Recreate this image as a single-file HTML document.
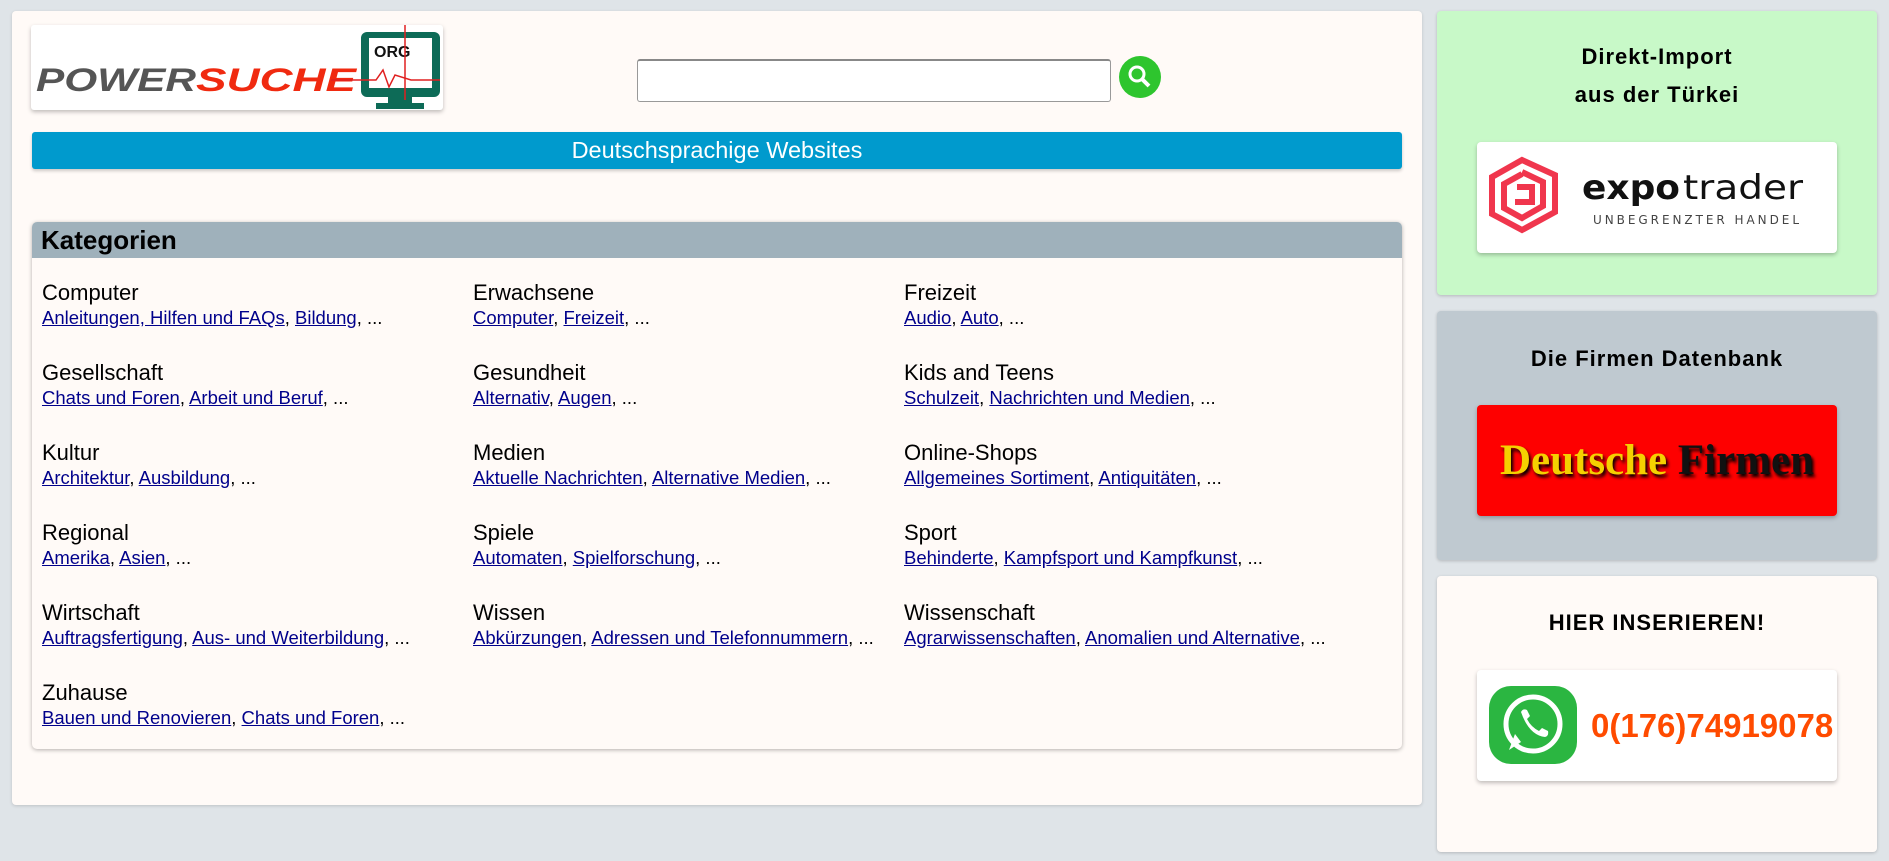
<!DOCTYPE html>
<html><head><meta charset="utf-8"><style>
*{box-sizing:border-box;margin:0;padding:0}
body{width:1889px;height:861px;background:#dfe4e8;font-family:"Liberation Sans",Arial,sans-serif;position:relative;overflow:hidden}
.main{position:absolute;left:12px;top:11px;width:1410px;height:794px;background:#fffaf7;border-radius:4px;box-shadow:0 1px 3px rgba(0,0,0,.15)}
.logo{position:absolute;left:31px;top:25px;width:412px;height:85px;background:#fff;border-radius:3px;box-shadow:0 2px 4px rgba(0,0,0,.25)}
.search{position:absolute;left:637px;top:59px;width:474px;height:43px;border:1px solid #999;border-top:2px solid #888;border-radius:3px;background:#fff}
.btn{position:absolute;left:1119px;top:56px;width:42px;height:42px;border-radius:50%;background:#2ec52e}
.blue{position:absolute;left:32px;top:132px;width:1370px;height:37px;background:#009acd;border-radius:3px;color:#fff;text-align:center;font-size:23.5px;line-height:37px;box-shadow:0 2px 3px rgba(0,0,0,.2)}
.kat{position:absolute;left:32px;top:222px;width:1370px;height:527px;background:#fffaf7;border-radius:5px;box-shadow:0 1px 4px rgba(0,0,0,.3)}
.kath{height:36px;background:#9fb1bb;border-radius:5px 5px 0 0;font-weight:bold;font-size:26px;line-height:36px;padding-left:9px;color:#000}
.c{position:absolute;width:430px}
.c b{display:block;font-weight:normal;font-size:22px;color:#000;line-height:26px}
.c span{display:block;font-size:18.5px;line-height:24px;color:#000;white-space:nowrap}
.c a{color:#00008b;text-decoration:underline}
.side{position:absolute;left:1437px;width:440px;border-radius:4px;box-shadow:0 1px 3px rgba(0,0,0,.2);text-align:center}
.side h3{font-size:22px;letter-spacing:1px;line-height:38px;color:#000}
.card{position:absolute;left:40px;width:360px;height:111px;border-radius:4px;box-shadow:0 2px 4px rgba(0,0,0,.25);background:#fff}
</style></head><body>
<div class="main"></div>
<div class="logo">
<svg width="412" height="85" viewBox="0 0 412 85">
<text x="5" y="66" font-family="Liberation Sans" font-weight="bold" font-style="italic" font-size="32" fill="#555" textLength="160" lengthAdjust="spacingAndGlyphs">POWER</text>
<text x="165" y="66" font-family="Liberation Sans" font-weight="bold" font-style="italic" font-size="32" fill="#f02a10" textLength="160" lengthAdjust="spacingAndGlyphs">SUCHE</text>
<rect x="330" y="7" width="79" height="65" rx="6" fill="#0d6b57"/>
<rect x="338" y="13" width="63" height="50" fill="#fff"/>
<rect x="357" y="72" width="24" height="10" fill="#0d6b57"/><rect x="345" y="78" width="48" height="6" fill="#0d6b57"/>
<text x="343" y="32" font-family="Liberation Sans" font-weight="bold" font-size="16" fill="#111">ORG</text>
<path d="M300 55 L345 55 L352 45 L358 62 L364 50 L380 55 L409 55" stroke="#e02020" fill="none" stroke-width="1.5"/>
<line x1="374" y1="0" x2="374" y2="75" stroke="#e02020" stroke-width="1.5"/>
</svg></div>
<div class="search"></div>
<div class="btn"><svg width="42" height="42"><circle cx="18" cy="18" r="7" stroke="#fff" stroke-width="3" fill="none"/><line x1="23" y1="23" x2="30" y2="30" stroke="#fff" stroke-width="4"/></svg></div>
<div class="blue">Deutschsprachige Websites</div>
<div class="kat"><div class="kath">Kategorien</div></div>

<div class="c" style="left:42px;top:280px"><b>Computer</b><span><a>Anleitungen, Hilfen und FAQs</a>, <a>Bildung</a>, ...</span></div>
<div class="c" style="left:473px;top:280px"><b>Erwachsene</b><span><a>Computer</a>, <a>Freizeit</a>, ...</span></div>
<div class="c" style="left:904px;top:280px"><b>Freizeit</b><span><a>Audio</a>, <a>Auto</a>, ...</span></div>
<div class="c" style="left:42px;top:360px"><b>Gesellschaft</b><span><a>Chats und Foren</a>, <a>Arbeit und Beruf</a>, ...</span></div>
<div class="c" style="left:473px;top:360px"><b>Gesundheit</b><span><a>Alternativ</a>, <a>Augen</a>, ...</span></div>
<div class="c" style="left:904px;top:360px"><b>Kids and Teens</b><span><a>Schulzeit</a>, <a>Nachrichten und Medien</a>, ...</span></div>
<div class="c" style="left:42px;top:440px"><b>Kultur</b><span><a>Architektur</a>, <a>Ausbildung</a>, ...</span></div>
<div class="c" style="left:473px;top:440px"><b>Medien</b><span><a>Aktuelle Nachrichten</a>, <a>Alternative Medien</a>, ...</span></div>
<div class="c" style="left:904px;top:440px"><b>Online-Shops</b><span><a>Allgemeines Sortiment</a>, <a>Antiquitäten</a>, ...</span></div>
<div class="c" style="left:42px;top:520px"><b>Regional</b><span><a>Amerika</a>, <a>Asien</a>, ...</span></div>
<div class="c" style="left:473px;top:520px"><b>Spiele</b><span><a>Automaten</a>, <a>Spielforschung</a>, ...</span></div>
<div class="c" style="left:904px;top:520px"><b>Sport</b><span><a>Behinderte</a>, <a>Kampfsport und Kampfkunst</a>, ...</span></div>
<div class="c" style="left:42px;top:600px"><b>Wirtschaft</b><span><a>Auftragsfertigung</a>, <a>Aus- und Weiterbildung</a>, ...</span></div>
<div class="c" style="left:473px;top:600px"><b>Wissen</b><span><a>Abkürzungen</a>, <a>Adressen und Telefonnummern</a>, ...</span></div>
<div class="c" style="left:904px;top:600px"><b>Wissenschaft</b><span><a>Agrarwissenschaften</a>, <a>Anomalien und Alternative</a>, ...</span></div>
<div class="c" style="left:42px;top:680px"><b>Zuhause</b><span><a>Bauen und Renovieren</a>, <a>Chats und Foren</a>, ...</span></div>

<div class="side" style="top:11px;height:284px;background:#c8f9c8">
<h3 style="padding-top:27px">Direkt-Import<br>aus der Türkei</h3>
<div class="card" style="top:131px">
<svg width="360" height="111" viewBox="0 0 360 111">
<g fill="none" stroke="#f0364d" stroke-width="6">
<path d="M45 18 L78 33 L78 70 L45 88 L15 72 L15 35 Z"/>
<path d="M45 30 L66 40 L66 64 L45 76 L27 66 L27 42 L45 32"/>
<path d="M40 45 L55 45 L55 60 L38 60"/>
</g>
<text x="105" y="57" font-family="DejaVu Sans" font-weight="bold" font-size="34" fill="#111" textLength="98" lengthAdjust="spacingAndGlyphs">expo</text>
<text x="206" y="57" font-family="DejaVu Sans" font-size="34" fill="#111" textLength="120" lengthAdjust="spacingAndGlyphs">trader</text>
<text x="116" y="82" font-family="DejaVu Sans" font-size="12" fill="#444" textLength="206" lengthAdjust="spacing">UNBEGRENZTER HANDEL</text>
</svg></div>
</div>
<div class="side" style="top:311px;height:249px;background:#bfc9d0">
<h3 style="padding-top:29px">Die Firmen Datenbank</h3>
<div class="card" style="top:94px;background:#fe0000;line-height:111px;font-family:'Liberation Serif',serif;font-weight:bold;font-size:43px;text-shadow:2px 3px 3px #000;white-space:nowrap"><span style="color:#f5d000">Deutsche</span> <span style="color:#111">Firmen</span></div>
</div>
<div class="side" style="top:576px;height:276px;background:#fffaf7">
<h3 style="padding-top:28px">HIER INSERIEREN!</h3>
<div class="card" style="top:94px">
<svg width="100" height="111" style="position:absolute;left:10px;top:0"><rect x="2" y="16" width="88" height="78" rx="22" fill="#2bb641"/><circle cx="46" cy="54" r="27" fill="none" stroke="#fff" stroke-width="5"/><path d="M22 80 L28 64 L34 72 Z" fill="#fff"/><path d="M34 42 q2 -4 6 -2 l3 6 -3 3 q4 8 12 12 l3 -3 6 3 q1 5 -3 6 q-16 -2 -24 -25z" fill="#fff"/></svg>
<div style="position:absolute;left:114px;top:0;line-height:111px;font-size:33px;font-weight:bold;color:#ff4b00;white-space:nowrap">0(176)74919078</div>
</div>
</div>
</body></html>
